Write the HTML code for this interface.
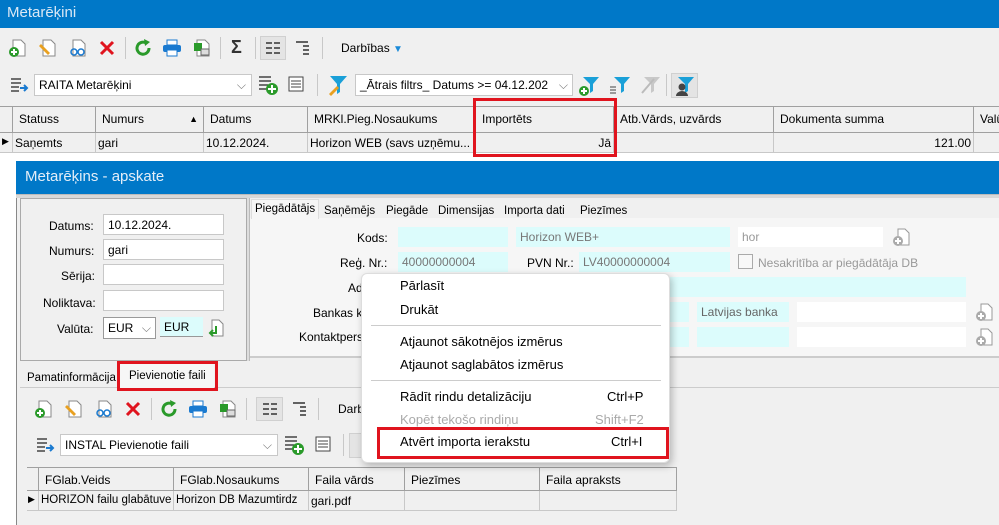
<!DOCTYPE html>
<html><head><meta charset="utf-8"><style>
*{box-sizing:border-box;margin:0;padding:0}
body{width:999px;height:525px;overflow:hidden;background:#fff;font-family:"Liberation Sans",sans-serif;font-size:12px;color:#000;position:relative}
.a{position:absolute}
.t{position:absolute;white-space:nowrap;line-height:14px}
.blue{background:#0078c8}
.f{position:absolute;background:#fff;border:1px solid #c8c8c8;height:21px;padding:3px 4px;white-space:nowrap;overflow:hidden}
.c{position:absolute;background:#dcfcfc;height:20px;padding:3px 4px;color:#777;white-space:nowrap}
.hc{position:absolute;border-right:1px solid #a0a0a0;height:100%;padding:5px 6px;white-space:nowrap;overflow:hidden}
.sep{position:absolute;width:1px;background:#c8c8c8}
.red{position:absolute;border:3px solid #e0141e}
svg{position:absolute}
</style></head><body>
<div class="a blue" style="left:0;top:0;width:999px;height:28px"></div>
<div class="t" style="left:7px;top:6px;font-size:15px;color:#dbe8f5">Metarēķini</div>
<div class="a" style="left:0;top:28px;width:999px;height:78px;background:#f0f0f0"></div>
<svg style="left:8px;top:38px" width="20" height="20"><path d="M5 2h8l4 4v12H5z" fill="#fff" stroke="#888"/><circle cx="6" cy="14" r="5" fill="#2a9a2a"/><path d="M6 11v6M3 14h6" stroke="#fff" stroke-width="2"/></svg>
<svg style="left:38px;top:38px" width="20" height="20"><path d="M5 2h8l4 4v12H5z" fill="#fff" stroke="#888"/><path d="M3 6l9 9-2 2-9-9z" fill="#e8a020"/></svg>
<svg style="left:68px;top:38px" width="20" height="20"><path d="M5 2h8l4 4v12H5z" fill="#fff" stroke="#888"/><circle cx="6" cy="14" r="3" fill="none" stroke="#1a7ad0" stroke-width="1.5"/><circle cx="13" cy="14" r="3" fill="none" stroke="#1a7ad0" stroke-width="1.5"/></svg>
<svg style="left:99px;top:40px" width="16" height="16"><path d="M2 2l12 12M14 2L2 14" stroke="#e0141e" stroke-width="3"/></svg>
<div class="sep" style="left:125px;top:37px;height:22px"></div>
<svg style="left:133px;top:38px" width="20" height="20"><path d="M16 10a6 6 0 1 1-3-5" fill="none" stroke="#2a9a2a" stroke-width="3"/><path d="M11 1l6 3-5 4z" fill="#2a9a2a"/></svg>
<svg style="left:162px;top:38px" width="20" height="20"><rect x="5" y="2" width="10" height="5" fill="#fff" stroke="#1a7ad0"/><rect x="1" y="7" width="18" height="7" rx="2" fill="#1a7ad0"/><rect x="5" y="12" width="10" height="6" fill="#fff" stroke="#1a7ad0"/></svg>
<svg style="left:192px;top:38px" width="20" height="20"><path d="M5 2h8l4 4v12H5z" fill="#fff" stroke="#888"/><rect x="2" y="5" width="8" height="8" fill="#2a9a2a"/><rect x="9" y="11" width="8" height="6" fill="#ddd" stroke="#666"/></svg>
<div class="sep" style="left:220px;top:37px;height:22px"></div>
<div class="t" style="left:231px;top:40px;font-size:18px;font-weight:bold;color:#333">Σ</div>
<div class="sep" style="left:255px;top:37px;height:22px"></div>
<div class="a" style="left:260px;top:36px;width:26px;height:24px;background:#e4e4e4;border:1px solid #d0d0d0"></div>
<svg style="left:265px;top:40px" width="16" height="16"><path d="M1 3h6M9 3h6M1 8h6M9 8h6M1 13h6M9 13h6" stroke="#333" stroke-width="1.5"/></svg>
<svg style="left:295px;top:40px" width="16" height="16"><path d="M1 2h12M8 6h6M8 10h6M8 14h6" stroke="#333" stroke-width="1.5"/></svg>
<div class="sep" style="left:322px;top:37px;height:22px"></div>
<div class="t" style="left:341px;top:41px;font-size:12px">Darbības <span style="color:#1a8ad8;font-size:10px">▼</span></div>
<svg style="left:10px;top:76px" width="20" height="18"><path d="M1 3h10M1 7h10M1 11h8M1 15h8" stroke="#444" stroke-width="1.5"/><path d="M10 12h6M14 9l3 3-3 3" stroke="#1a7ad0" stroke-width="2" fill="none"/></svg>
<div class="f" style="left:34px;top:74px;width:218px;height:22px">RAITA Metarēķini<span style="position:absolute;right:5px;color:#777">⌵</span></div>
<svg style="left:258px;top:74px" width="22" height="22"><path d="M1 3h12M1 7h12M1 11h9M1 15h7" stroke="#444" stroke-width="1.5"/><circle cx="14" cy="15" r="6" fill="#2a9a2a"/><path d="M14 11v8M10 15h8" stroke="#fff" stroke-width="2"/></svg>
<svg style="left:288px;top:76px" width="20" height="18"><rect x="1" y="1" width="14" height="14" fill="#fff" stroke="#444"/><path d="M3 5h10M3 8h10M3 11h10" stroke="#444"/></svg>
<div class="sep" style="left:317px;top:74px;height:22px"></div>
<svg style="left:327px;top:74px" width="22" height="22"><path d="M3 2h17l-7 8v8l-3 2V10z" fill="#1aa0d8"/><path d="M2 20l8-8 2 2-8 8z" fill="#e8a020"/></svg>
<div class="f" style="left:355px;top:74px;width:218px;height:22px">_Ātrais filtrs_ Datums &gt;= 04.12.202<span style="position:absolute;right:0;padding:0 4px;color:#777;background:#fff">⌵</span></div>
<svg style="left:578px;top:75px" width="22" height="22"><path d="M5 2h16l-6 7v7l-3 2V9z" fill="#1aa0d8"/><circle cx="6" cy="16" r="5" fill="#2a9a2a"/><path d="M6 13v6M3 16h6" stroke="#fff" stroke-width="2"/></svg>
<svg style="left:609px;top:75px" width="22" height="22"><path d="M5 2h16l-6 7v7l-3 2V9z" fill="#1aa0d8"/><path d="M1 12h6M1 15h6M1 18h6" stroke="#444"/></svg>
<svg style="left:639px;top:75px" width="22" height="22"><path d="M5 2h16l-6 7v7l-3 2V9z" fill="#c8c8c8"/><path d="M3 18l12-14" stroke="#bbb" stroke-width="2"/></svg>
<div class="sep" style="left:666px;top:74px;height:22px"></div>
<div class="a" style="left:671px;top:73px;width:27px;height:25px;background:#e4e4e4;border:1px solid #d0d0d0"></div>
<svg style="left:673px;top:75px" width="22" height="22"><path d="M5 2h16l-6 7v7l-3 2V9z" fill="#1aa0d8"/><circle cx="9" cy="12" r="3.5" fill="#444"/><path d="M3 21a6 5 0 0 1 12 0z" fill="#444"/></svg>
<div class="a" style="left:0;top:106px;width:999px;height:27px;background:#f0f0f0;border-top:1px solid #a0a0a0;border-bottom:1px solid #a0a0a0">
<div class="hc" style="left:0;width:13px;padding:0"></div>
<div class="hc" style="left:13px;width:83px">Statuss</div>
<div class="hc" style="left:96px;width:108px">Numurs<span style="position:absolute;right:5px;font-size:9px;top:7px">▲</span></div>
<div class="hc" style="left:204px;width:104px">Datums</div>
<div class="hc" style="left:308px;width:168px">MRKl.Pieg.Nosaukums</div>
<div class="hc" style="left:476px;width:138px">Importēts</div>
<div class="hc" style="left:614px;width:160px">Atb.Vārds, uzvārds</div>
<div class="hc" style="left:774px;width:200px">Dokumenta summa</div>
<div class="hc" style="left:974px;width:40px">Valū</div>
</div>
<div class="a" style="left:0;top:133px;width:999px;height:20px;background:#f0f0f0;border-bottom:1px solid #c8c8c8">
<div class="hc" style="left:0;width:13px;padding:3px 2px;border-color:#c8c8c8;font-size:9px">▶</div>
<div class="hc" style="left:13px;width:83px;padding:3px 2px;border-color:#c8c8c8">Saņemts</div>
<div class="hc" style="left:96px;width:108px;padding:3px 2px;border-color:#c8c8c8">gari</div>
<div class="hc" style="left:204px;width:104px;padding:3px 2px;border-color:#c8c8c8">10.12.2024.</div>
<div class="hc" style="left:308px;width:168px;padding:3px 2px;border-color:#c8c8c8">Horizon WEB (savs uzņēmu...</div>
<div class="hc" style="left:476px;width:138px;padding:3px 2px;border-color:#c8c8c8;text-align:right">Jā</div>
<div class="hc" style="left:614px;width:160px;border-color:#c8c8c8"></div>
<div class="hc" style="left:774px;width:200px;padding:3px 2px;border-color:#c8c8c8;text-align:right">121.00</div>
</div>
<div class="red" style="left:473px;top:98px;width:144px;height:59px"></div>
<div class="a" style="left:16px;top:161px;width:983px;height:364px;background:#f0f0f0;border-left:1px solid #888"></div>
<div class="a blue" style="left:16px;top:161px;width:983px;height:33px"></div>
<div class="t" style="left:25px;top:170px;font-size:15px;color:#e4eef8">Metarēķins - apskate</div>
<div class="a" style="left:16px;top:194px;width:983px;height:4px;background:#d8d8d8;border-top:1px solid #bbb"></div>
<div class="a" style="left:20px;top:198px;width:227px;height:163px;border:1px solid #aaa"></div>
<div class="a" style="left:247px;top:198px;width:3px;height:163px;background:#ddd;border-right:1px solid #bbb"></div>
<div class="t" style="left:49px;top:219px">Datums:</div><div class="f" style="left:103px;top:214px;width:121px">10.12.2024.</div>
<div class="t" style="left:49px;top:244px">Numurs:</div><div class="f" style="left:103px;top:239px;width:121px">gari</div>
<div class="t" style="left:61px;top:269px">Sērija:</div><div class="f" style="left:103px;top:264px;width:121px"></div>
<div class="t" style="left:43px;top:296px">Noliktava:</div><div class="f" style="left:103px;top:290px;width:121px"></div>
<div class="t" style="left:57px;top:322px">Valūta:</div>
<div class="f" style="left:103px;top:317px;width:53px;height:22px;border-color:#999">EUR<span style="position:absolute;right:4px;color:#777">⌵</span></div>
<div class="c" style="left:160px;top:317px;width:43px;color:#000;border-bottom:1px solid #999">EUR</div>
<svg style="left:207px;top:318px" width="18" height="20"><path d="M5 2h7l4 4v12H5z" fill="#fff" stroke="#888"/><path d="M9 8v7H4M6 12l-3 3 3 3" stroke="#2a9a2a" stroke-width="2" fill="none"/></svg>
<div class="a" style="left:250px;top:218px;width:749px;height:140px;background:#f6f6f6;border-bottom:2px solid #ccc"></div>
<div class="a" style="left:251px;top:199px;width:68px;height:20px;background:#f6f6f6;border:1px solid #ddd;border-bottom:none"></div>
<div class="t" style="left:255px;top:202px;font-size:11.5px">Piegādātājs</div>
<div class="t" style="left:324px;top:204px;font-size:11.5px">Saņēmējs</div>
<div class="t" style="left:386px;top:204px;font-size:11.5px">Piegāde</div>
<div class="t" style="left:438px;top:204px;font-size:11.5px">Dimensijas</div>
<div class="t" style="left:504px;top:204px;font-size:11.5px">Importa dati</div>
<div class="t" style="left:580px;top:204px;font-size:11.5px">Piezīmes</div>
<div class="t" style="left:357px;top:231px">Kods:</div>
<div class="t" style="left:340px;top:256px">Reģ. Nr.:</div>
<div class="t" style="left:348px;top:281px">Ad</div>
<div class="t" style="left:313px;top:306px">Bankas k</div>
<div class="t" style="left:299px;top:330px">Kontaktpers</div>
<div class="c" style="left:398px;top:227px;width:110px"></div>
<div class="c" style="left:516px;top:227px;width:214px">Horizon WEB+</div>
<div class="f" style="left:738px;top:227px;width:145px;height:20px;border:none;color:#999">hor</div>
<div class="c" style="left:398px;top:252px;width:110px">40000000004</div>
<div class="t" style="left:527px;top:256px">PVN Nr.:</div>
<div class="c" style="left:579px;top:252px;width:151px">LV40000000004</div>
<div class="a" style="left:738px;top:254px;width:15px;height:15px;border:1px solid #aaa;background:#f8f8f8"></div>
<div class="t" style="left:758px;top:256px;color:#999">Nesakritība ar piegādātāja DB</div>
<div class="c" style="left:398px;top:277px;width:568px"></div>
<div class="c" style="left:398px;top:302px;width:291px"></div>
<div class="c" style="left:697px;top:302px;width:92px;color:#666">Latvijas banka</div>
<div class="f" style="left:797px;top:302px;width:169px;height:20px;border:none"></div>
<div class="c" style="left:398px;top:327px;width:291px"></div>
<div class="c" style="left:697px;top:327px;width:92px"></div>
<div class="f" style="left:797px;top:327px;width:169px;height:20px;border:none"></div>
<svg style="left:892px;top:227px" width="20" height="20"><path d="M6 2h7l4 4v12H6z" fill="#fff" stroke="#999"/><circle cx="6" cy="14" r="5" fill="#aaa"/><path d="M6 11v6M3 14h6" stroke="#fff" stroke-width="2"/></svg>
<svg style="left:975px;top:302px" width="20" height="20"><path d="M6 2h7l4 4v12H6z" fill="#fff" stroke="#999"/><circle cx="6" cy="14" r="5" fill="#aaa"/><path d="M6 11v6M3 14h6" stroke="#fff" stroke-width="2"/></svg>
<svg style="left:975px;top:327px" width="20" height="20"><path d="M6 2h7l4 4v12H6z" fill="#fff" stroke="#999"/><circle cx="6" cy="14" r="5" fill="#aaa"/><path d="M6 11v6M3 14h6" stroke="#fff" stroke-width="2"/></svg>
<div class="a" style="left:20px;top:387px;width:979px;height:1px;background:#ccc"></div>
<div class="t" style="left:27px;top:371px;font-size:11.5px">Pamatinformācija</div>
<div class="a" style="left:120px;top:363px;width:94px;height:25px;background:#f6f6f6"></div>
<div class="t" style="left:129px;top:369px;font-size:11.5px">Pievienotie faili</div>
<div class="red" style="left:117px;top:361px;width:101px;height:30px"></div>
<svg style="left:34px;top:399px" width="20" height="20"><path d="M5 2h8l4 4v12H5z" fill="#fff" stroke="#888"/><circle cx="6" cy="14" r="5" fill="#2a9a2a"/><path d="M6 11v6M3 14h6" stroke="#fff" stroke-width="2"/></svg>
<svg style="left:64px;top:399px" width="20" height="20"><path d="M5 2h8l4 4v12H5z" fill="#fff" stroke="#888"/><path d="M3 6l9 9-2 2-9-9z" fill="#e8a020"/></svg>
<svg style="left:94px;top:399px" width="20" height="20"><path d="M5 2h8l4 4v12H5z" fill="#fff" stroke="#888"/><circle cx="6" cy="14" r="3" fill="none" stroke="#1a7ad0" stroke-width="1.5"/><circle cx="13" cy="14" r="3" fill="none" stroke="#1a7ad0" stroke-width="1.5"/></svg>
<svg style="left:125px;top:401px" width="16" height="16"><path d="M2 2l12 12M14 2L2 14" stroke="#e0141e" stroke-width="3"/></svg>
<div class="sep" style="left:151px;top:398px;height:22px"></div>
<svg style="left:159px;top:399px" width="20" height="20"><path d="M16 10a6 6 0 1 1-3-5" fill="none" stroke="#2a9a2a" stroke-width="3"/><path d="M11 1l6 3-5 4z" fill="#2a9a2a"/></svg>
<svg style="left:188px;top:399px" width="20" height="20"><rect x="5" y="2" width="10" height="5" fill="#fff" stroke="#1a7ad0"/><rect x="1" y="7" width="18" height="7" rx="2" fill="#1a7ad0"/><rect x="5" y="12" width="10" height="6" fill="#fff" stroke="#1a7ad0"/></svg>
<svg style="left:218px;top:399px" width="20" height="20"><path d="M5 2h8l4 4v12H5z" fill="#fff" stroke="#888"/><rect x="2" y="5" width="8" height="8" fill="#2a9a2a"/><rect x="9" y="11" width="8" height="6" fill="#ddd" stroke="#666"/></svg>
<div class="sep" style="left:246px;top:398px;height:22px"></div>
<div class="a" style="left:256px;top:397px;width:27px;height:24px;background:#e4e4e4;border:1px solid #d0d0d0"></div>
<svg style="left:262px;top:401px" width="16" height="16"><path d="M1 3h6M9 3h6M1 8h6M9 8h6M1 13h6M9 13h6" stroke="#333" stroke-width="1.5"/></svg>
<svg style="left:292px;top:401px" width="16" height="16"><path d="M1 2h12M8 6h6M8 10h6M8 14h6" stroke="#333" stroke-width="1.5"/></svg>
<div class="sep" style="left:318px;top:398px;height:22px"></div>
<div class="t" style="left:338px;top:402px">Darb</div>
<svg style="left:36px;top:436px" width="20" height="18"><path d="M1 3h10M1 7h10M1 11h8M1 15h8" stroke="#444" stroke-width="1.5"/><path d="M10 12h6M14 9l3 3-3 3" stroke="#1a7ad0" stroke-width="2" fill="none"/></svg>
<div class="f" style="left:60px;top:434px;width:218px;height:22px">INSTAL Pievienotie faili<span style="position:absolute;right:5px;color:#777">⌵</span></div>
<svg style="left:284px;top:434px" width="22" height="22"><path d="M1 3h12M1 7h12M1 11h9M1 15h7" stroke="#444" stroke-width="1.5"/><circle cx="14" cy="15" r="6" fill="#2a9a2a"/><path d="M14 11v8M10 15h8" stroke="#fff" stroke-width="2"/></svg>
<svg style="left:315px;top:436px" width="20" height="18"><rect x="1" y="1" width="14" height="14" fill="#fff" stroke="#444"/><path d="M3 5h10M3 8h10M3 11h10" stroke="#444"/></svg>
<div class="sep" style="left:343px;top:434px;height:22px"></div>
<div class="a" style="left:349px;top:433px;width:14px;height:25px;background:#e4e4e4;border:1px solid #d0d0d0"></div>
<div class="a" style="left:27px;top:467px;width:650px;height:24px;background:#f0f0f0;border-top:1px solid #a0a0a0;border-bottom:1px solid #a0a0a0">
<div class="hc" style="left:0;width:12px;padding:0"></div>
<div class="hc" style="left:12px;width:135px">FGlab.Veids</div>
<div class="hc" style="left:147px;width:135px">FGlab.Nosaukums</div>
<div class="hc" style="left:282px;width:96px">Faila vārds</div>
<div class="hc" style="left:378px;width:135px">Piezīmes</div>
<div class="hc" style="left:513px;width:137px">Faila apraksts</div>
</div>
<div class="a" style="left:27px;top:491px;width:650px;height:20px;background:#f0f0f0;border-bottom:1px solid #c8c8c8">
<div class="hc" style="left:0;width:12px;padding:3px 1px;border-color:#c8c8c8;font-size:9px">▶</div>
<div class="hc" style="left:12px;width:135px;padding:3px 2px;border-color:#c8c8c8;font-size:11.5px">HORIZON failu glabātuve</div>
<div class="hc" style="left:147px;width:135px;padding:3px 2px;border-color:#c8c8c8;font-size:11.5px">Horizon DB Mazumtirdz</div>
<div class="hc" style="left:282px;width:96px;padding:3px 2px;border-color:#c8c8c8">gari.pdf</div>
<div class="hc" style="left:378px;width:135px;border-color:#c8c8c8"></div>
<div class="hc" style="left:513px;width:137px;border-color:#c8c8c8"></div>
</div>
<div class="a" style="left:361px;top:273px;width:309px;height:190px;background:#fff;border:1px solid #ddd;border-radius:6px;box-shadow:2px 3px 8px rgba(0,0,0,0.25)"></div>
<div class="t" style="left:400px;top:279px;font-size:13px">Pārlasīt</div>
<div class="t" style="left:400px;top:303px;font-size:13px">Drukāt</div>
<div class="a" style="left:371px;top:325px;width:290px;height:1px;background:#ccc"></div>
<div class="t" style="left:400px;top:335px;font-size:13px">Atjaunot sākotnējos izmērus</div>
<div class="t" style="left:400px;top:358px;font-size:13px">Atjaunot saglabātos izmērus</div>
<div class="a" style="left:371px;top:380px;width:290px;height:1px;background:#ccc"></div>
<div class="t" style="left:400px;top:390px;font-size:13px">Rādīt rindu detalizāciju</div>
<div class="t" style="left:607px;top:390px;font-size:13px">Ctrl+P</div>
<div class="t" style="left:400px;top:413px;font-size:13px;color:#aaa">Kopēt tekošo rindiņu</div>
<div class="t" style="left:595px;top:413px;font-size:13px;color:#aaa">Shift+F2</div>
<div class="t" style="left:400px;top:435px;font-size:13px">Atvērt importa ierakstu</div>
<div class="t" style="left:611px;top:435px;font-size:13px">Ctrl+I</div>
<div class="red" style="left:377px;top:427px;width:292px;height:32px"></div>
</body></html>
